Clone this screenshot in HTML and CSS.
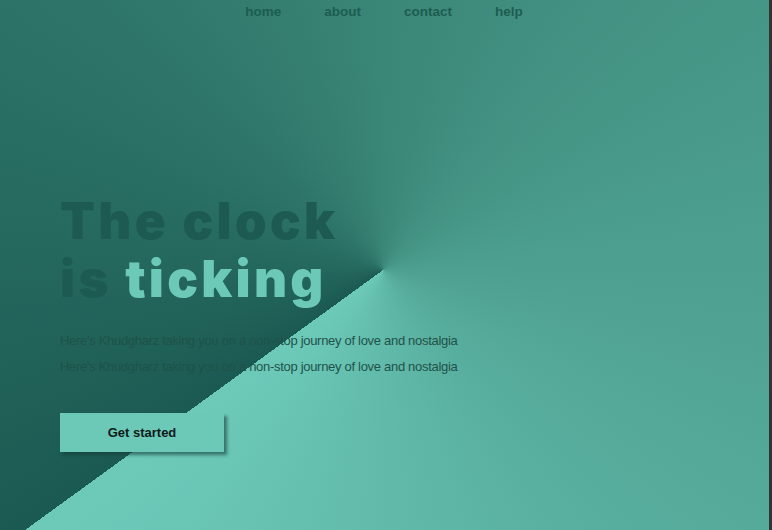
FILE: index.html
```html
<!DOCTYPE html>
<html lang="en">
<head>
<meta charset="utf-8">
<title>The clock is ticking</title>
<link rel="stylesheet" href="styles.css">
</head>
<body>
<div class="page">
  <nav class="nav">
    <a href="#">home</a>
    <a href="#">about</a>
    <a href="#">contact</a>
    <a href="#">help</a>
  </nav>
  <main class="hero">
    <h1 class="title">The clock<br>is <span class="accent">ticking</span></h1>
    <p class="lead">Here's Khudgharz taking you on a non-stop journey of love and nostalgia</p>
    <p class="lead">Here's Khudgharz taking you on a non-stop journey of love and nostalgia</p>
    <button class="cta">Get started</button>
  </main>
</div>
</body>
</html>
```
FILE: styles.css
```css
html, body {
  margin: 0;
  padding: 0;
  height: 100%;
  background: #333333;
}
.page {
  width: calc(100% - 3px);
  height: 100%;
  overflow: hidden;
  background: conic-gradient(from 234deg at 383px 270px, #1b5a52 0deg, #3a8677 126deg, #6dcab9 360deg);
  font-family: "Liberation Sans", Arial, sans-serif;
}
.nav {
  display: flex;
  justify-content: center;
  gap: 43px;
  padding-top: 4px;
  padding-right: 1px;
}
.nav a {
  color: #1d5c50;
  text-decoration: none;
  font-weight: bold;
  font-size: 13.5px;
}
.hero {
  padding: 173px 0 0 60px;
}
.title {
  margin: 0 0 20px;
  font-family: Inter, "Liberation Sans", sans-serif;
  font-weight: 900;
  font-size: 51px;
  line-height: 58px;
  letter-spacing: 3.3px;
  color: #1c5a52;
}
.accent {
  color: #6cc9b8;
}
.lead {
  margin: 0;
  font-size: 13px;
  line-height: 26px;
  letter-spacing: -0.3px;
  color: #1f5249;
}
.cta {
  margin-top: 33px;
  width: 164px;
  height: 39px;
  border: none;
  background: #6cc9b8;
  box-shadow: 3px 3px 3px rgba(20, 60, 55, 0.6);
  font-family: "Liberation Sans", Arial, sans-serif;
  font-weight: bold;
  font-size: 13px;
  color: #0e1a18;
  cursor: pointer;
}
```
